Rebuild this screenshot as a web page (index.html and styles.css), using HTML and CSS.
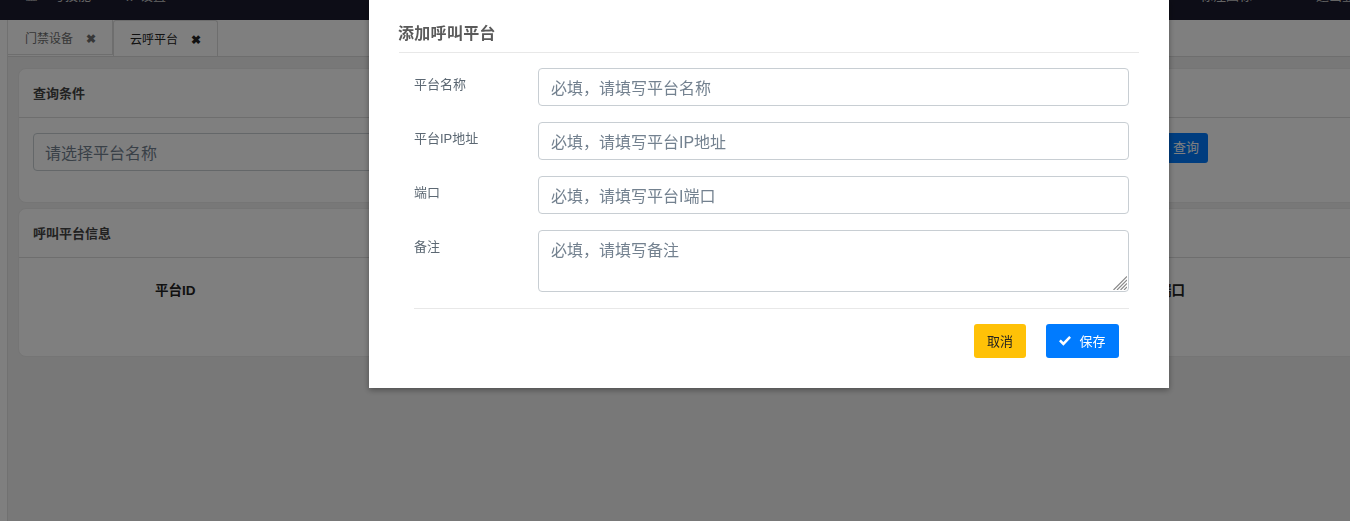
FILE: index.html
```html
<!DOCTYPE html>
<html lang="zh">
<head>
<meta charset="utf-8">
<title>云呼平台</title>
<link rel="stylesheet" href="styles.css">
</head>
<body>
<header class="nav">
  <div class="nav-group">
    <span class="nav-item nav-a"><i class="ico-a">▦</i>号技能</span>
    <span class="nav-item"><i class="ico-b">✿</i>设置</span>
  </div>
  <div class="nav-group">
    <span class="nav-item">标注图标</span>
    <span class="nav-item nav-z"><i class="ico-c">●</i>退出登录</span>
  </div>
</header>
<div class="layout">
  <aside class="rail"></aside>
  <main class="main">
    <nav class="tabs">
      <span class="tab">门禁设备<b class="x">✖</b></span>
      <span class="tab active">云呼平台<b class="x">✖</b></span>
    </nav>
    <div class="content">
      <section class="card">
        <h3 class="card-head">查询条件</h3>
        <div class="query">
          <div class="fake-select">请选择平台名称</div>
          <button class="btn-query">查询</button>
        </div>
      </section>
      <section class="card">
        <h3 class="card-head">呼叫平台信息</h3>
        <div class="thead">
          <span>平台ID</span>
          <span>端口</span>
        </div>
      </section>
    </div>
  </main>
</div>
<div class="backdrop"></div>
<div class="modal">
  <h2 class="modal-title">添加呼叫平台</h2>
  <form class="form">
    <div class="row"><label class="lbl">平台名称</label><input class="ctl" placeholder="必填，请填写平台名称"></div>
    <div class="row"><label class="lbl">平台IP地址</label><input class="ctl" placeholder="必填，请填写平台IP地址"></div>
    <div class="row"><label class="lbl">端口</label><input class="ctl" placeholder="必填，请填写平台I端口"></div>
    <div class="row"><label class="lbl">备注</label>
      <div class="field">
        <textarea class="ctl area" placeholder="必填，请填写备注"></textarea>
        <svg class="grip" viewBox="0 0 14 14" width="14" height="14"><path d="M0.5 14 L14 0.5 M4 14 L14 4 M7.5 14 L14 7.5 M11 14 L14 11" stroke="#8a8a8a" stroke-width="1.2" fill="none"/></svg>
      </div>
    </div>
    <div class="foot">
      <button type="button" class="btn cancel">取消</button>
      <button type="button" class="btn save"><svg class="chk" viewBox="0 0 12 10" width="12" height="10"><path d="M0 5.2 L1.8 3.4 L4.4 6 L10.2 0 L12 1.8 L4.4 9.7 Z" fill="#fff"/></svg>保存</button>
    </div>
  </form>
</div>
</body>
</html>
```
FILE: styles.css
```css
* { box-sizing: border-box; }
html, body { margin: 0; height: 521px; overflow: hidden; }
body {
  font-family: "Liberation Sans", "Noto Sans CJK SC", sans-serif;
  font-size: 13px;
  color: #222;
  background: #f0f0f0;
}
.nav {
  height: 20px;
  background: #1b1b2e;
  display: flex;
  justify-content: space-between;
  overflow: hidden;
  color: #c8c8c8;
}
.nav-group { display: flex; align-items: flex-start; height: 20px; margin-top: -14px; }
.nav-item { white-space: nowrap; line-height: 20px; height: 20px; font-style: normal; }
.nav-item i { font-style: normal; display: inline-block; }
.ico-a { width: 27px; }
.ico-b { width: 17px; }
.ico-c { width: 16px; }
.nav-a { margin-left: 25px; margin-right: 32px; }
.nav-z { margin-left: 48px; margin-right: -18px; }
.layout { display: flex; height: 501px; }
.rail { width: 8px; background: #fff; border-right: 1px solid #e2e2e2; flex: none; }
.main { flex: 1; background: #f0f0f0; min-width: 0; }
.tabs {
  height: 37px;
  display: flex;
  background: #fff;
  border-bottom: 1px solid #dcdcdc;
  font-size: 12px;
}
.tab {
  width: 105px;
  height: 35px;
  padding-left: 17px;
  line-height: 38px;
  color: #6e6e6e;
  border-right: 1px solid #dcdcdc;
  border-bottom: 1px solid #dcdcdc;
  white-space: nowrap;
}
.tab.active {
  height: 36px;
  padding-left: 16px;
  color: #222;
  background: #fff;
  border: 1px solid #dcdcdc;
  border-bottom: 0;
  border-radius: 3px 3px 0 0;
}
.x { font-size: 12px; margin-left: 13px; font-weight: 700; }
.content { padding: 11px 0 0 10px; display: flex; flex-direction: column; gap: 5px; margin-right: -12px; }
.card {
  background: #fff;
  border: 1px solid #eaeaea;
  border-radius: 8px;
}
.card-head {
  margin: 0;
  height: 49px;
  padding-left: 14px;
  line-height: 50px;
  font-size: 13px;
  font-weight: 700;
  color: #444;
  border-bottom: 1px solid #dcdcdc;
}
.query { height: 84px; padding: 15px 0 0 14px; display: flex; justify-content: space-between; align-items: flex-start; }
.fake-select {
  width: 600px;
  height: 38px;
  padding-left: 11px;
  line-height: 39px;
  font-size: 16px;
  color: #73818f;
  border: 1px solid #c8ced3;
  border-radius: 4px;
}
.btn-query {
  width: 64px;
  height: 30px;
  margin-right: 153px;
  padding: 0 0 4px 29px;
  font: inherit;
  color: #fff;
  background: #007bff;
  border: 0;
  border-radius: 3px;
  text-align: left;
}
.thead { height: 98px; padding: 0 176px 0 136px; display: flex; justify-content: space-between; font-weight: 700; color: #222; line-height: 66px; font-size: 13.5px; }
.backdrop { position: fixed; inset: 0; background: rgba(0, 0, 0, 0.5); }
.modal {
  position: fixed;
  left: 369px;
  top: 0;
  width: 800px;
  height: 388px;
  padding: 0 30px;
  background: #fff;
  box-shadow: 0 2px 6px rgba(0, 0, 0, 0.35);
}
.modal-title {
  margin: 0;
  height: 53px;
  padding-top: 24px;
  line-height: 20px;
  font-size: 16px;
  font-weight: 700;
  text-indent: -1px;
  letter-spacing: 0.3px;
  color: #5a5a5a;
  border-bottom: 1px solid #e8e8e8;
}
.form { padding: 15px 10px 0 15px; }
.row { display: flex; margin-bottom: 16px; }
.lbl { width: 124px; font-size: 13px; line-height: 20px; padding-top: 7px; color: #5c6873; flex: none; }
.field { flex: 1; min-width: 0; position: relative; display: flex; }
.ctl {
  flex: 1;
  min-width: 0;
  height: 38px;
  padding: 8px 12px 4px;
  font-family: inherit;
  font-size: 16px;
  line-height: 24px;
  color: #5c6873;
  border: 1px solid #c8ced3;
  border-radius: 4px;
  background: #fff;
  outline: 0;
}
.ctl::placeholder { color: #73818f; opacity: 1; }
.area { height: 62px; display: block; resize: none; }
.grip { position: absolute; right: 2px; bottom: 2px; }
.foot {
  padding-top: 15px;
  border-top: 1px solid #e8e8e8;
  display: flex;
  justify-content: flex-end;
  gap: 20px;
  padding-right: 10px;
}
.btn {
  height: 34px;
  padding: 0 0 2px;
  border: 0;
  border-radius: 3px;
  font-family: inherit;
  font-size: 13px;
  display: flex;
  align-items: center;
  justify-content: center;
}
.cancel { width: 52px; background: #ffc107; color: #222; }
.save { width: 73px; background: #007bff; color: #fff; }
.chk { margin-right: 8px; margin-top: 2px; }
```
